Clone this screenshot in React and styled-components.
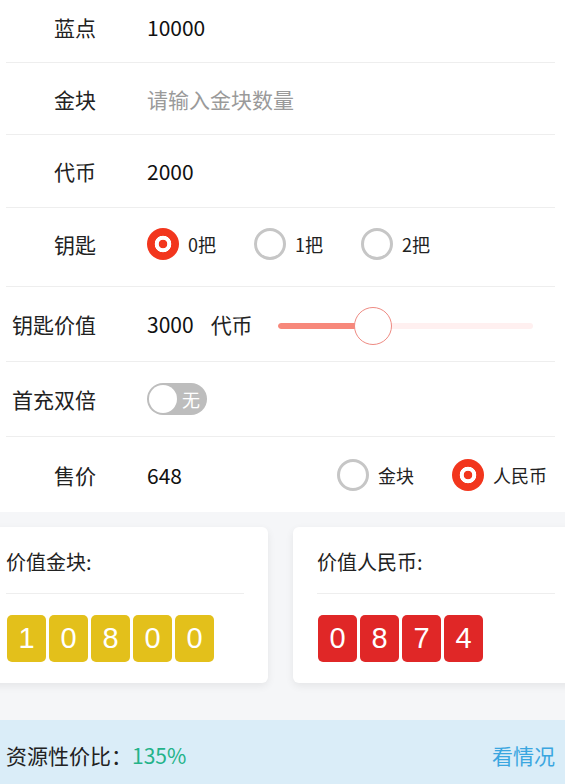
import React from 'react';
import styled, { createGlobalStyle } from 'styled-components';

const GlobalStyle = createGlobalStyle`
  html, body {
    margin: 0;
    padding: 0;
    background: #ffffff;
    overflow-x: hidden;
  }
  body {
    font-family: "Noto Sans CJK SC", "Noto Sans", sans-serif;
    color: #222;
  }
  * { box-sizing: border-box; }
`;

const Page = styled.div`
  width: 565px;
  overflow: hidden;
`;

const Form = styled.div`
  background: #fff;
  margin-top: -9px;
`;

const Row = styled.div`
  display: flex;
  align-items: center;
  height: ${p => p.h || 72}px;
  margin: 0 10px 0 6px;
  padding-right: 8px;
  padding-bottom: ${p => p.lift || 0}px;
  border-bottom: ${p => (p.last ? 'none' : '1px solid #eeeeee')};
`;

const Label = styled.div`
  width: 90px;
  flex: none;
  text-align: right;
  font-size: 21px;
  color: #222;
`;

const Value = styled.div`
  margin-left: 51px;
  font-size: 21px;
  color: ${p => (p.placeholder ? '#9a9a9a' : '#111')};
`;

const Unit = styled.span`
  margin-left: 17px;
  font-size: 21px;
  color: #222;
`;

const RadioGroup = styled.div`
  display: flex;
  align-items: center;
  margin-left: ${p => (p.right ? 'auto' : '51px')};
`;

const RadioItem = styled.div`
  display: flex;
  align-items: center;
  gap: 9px;
  font-size: 18px;
  color: #222;
  & + & {
    margin-left: 38px;
  }
`;

const RadioCircle = styled.span`
  width: 32px;
  height: 32px;
  border-radius: 50%;
  flex: none;
  ${p =>
    p.checked
      ? `background: radial-gradient(circle, #f2361d 0 4px, #fff 4.6px 8px, #f2361d 8.6px);`
      : `border: 3px solid #c6c6c6; background: #fff;`}
`;

const SliderWrap = styled.div`
  position: relative;
  margin: 4px 0 0 25px;
  width: 255px;
  height: 38px;
  display: flex;
  align-items: center;
`;

const Track = styled.div`
  width: 100%;
  height: 6px;
  border-radius: 3px;
  background: #fff0f0;
  overflow: hidden;
`;

const Fill = styled.div`
  height: 100%;
  background: #f7887b;
  border-radius: 3px;
`;

const Thumb = styled.div`
  position: absolute;
  top: 0;
  width: 38px;
  height: 38px;
  margin-left: -19px;
  border-radius: 50%;
  background: #fff;
  border: 1px solid #ee8a82;
`;

const Switch = styled.div`
  margin-left: 51px;
  width: 60px;
  height: 32px;
  border-radius: 16px;
  background: #bdbdbd;
  display: flex;
  align-items: center;
  padding: 0 4px 0 2px;
`;

const Knob = styled.span`
  width: 28px;
  height: 28px;
  border-radius: 50%;
  background: #fff;
`;

const SwitchText = styled.span`
  margin-left: 5px;
  font-size: 18px;
  color: #fff;
`;

const Gray = styled.div`
  background: #f5f6f8;
  padding: 15px 0 37px;
`;

const Cards = styled.div`
  display: flex;
  gap: 25px;
  margin-left: -18px;
`;

const Card = styled.div`
  flex: none;
  width: 286px;
  height: 156px;
  background: #fff;
  border-radius: 6px;
  box-shadow: 0 3px 8px rgba(0, 0, 0, 0.07);
  padding: 0 24px;
`;

const CardTitle = styled.div`
  height: 67px;
  padding-top: 20px;
  font-size: 20px;
  color: #222;
  border-bottom: 1px solid #eeeeee;
`;

const Digits = styled.div`
  display: flex;
  gap: 3px;
  margin-top: 21px;
  padding-left: 1px;
`;

const Digit = styled.span`
  width: 39px;
  height: 47px;
  border-radius: 5px;
  background: ${p => p.color};
  color: #fff;
  font-family: "Liberation Sans", Arial, sans-serif;
  font-size: 29px;
  display: flex;
  align-items: center;
  justify-content: center;
`;

const Footer = styled.div`
  height: 70px;
  background: #daedf8;
  display: flex;
  align-items: center;
  justify-content: space-between;
  padding: 0 10px 0 6px;
  font-size: 21px;
  color: #222;
`;

const Ratio = styled.span`
  color: #23b389;
`;

const Link = styled.span`
  color: #3aa6e0;
`;

const keyOptions = ['0把', '1把', '2把'];

const Radio = ({ checked, children }) => (
  <RadioItem>
    <RadioCircle checked={checked} />
    {children}
  </RadioItem>
);

const App = () => {
  const keyValue = 3000;
  const pct = (keyValue / 8000) * 100;

  return (
    <Page>
      <GlobalStyle />
      <Form>
        <Row>
          <Label>蓝点</Label>
          <Value>10000</Value>
        </Row>
        <Row>
          <Label>金块</Label>
          <Value placeholder>请输入金块数量</Value>
        </Row>
        <Row h={73}>
          <Label>代币</Label>
          <Value>2000</Value>
        </Row>
        <Row h={79} lift={6}>
          <Label>钥匙</Label>
          <RadioGroup>
            {keyOptions.map((k, i) => (
              <Radio key={k} checked={i === 0}>{k}</Radio>
            ))}
          </RadioGroup>
        </Row>
        <Row h={75}>
          <Label>钥匙价值</Label>
          <Value>
            {keyValue}
            <Unit>代币</Unit>
          </Value>
          <SliderWrap>
            <Track>
              <Fill style={{ width: `${pct}%` }} />
            </Track>
            <Thumb style={{ left: `${pct}%` }} />
          </SliderWrap>
        </Row>
        <Row h={75}>
          <Label>首充双倍</Label>
          <Switch>
            <Knob />
            <SwitchText>无</SwitchText>
          </Switch>
        </Row>
        <Row h={75} last>
          <Label>售价</Label>
          <Value>648</Value>
          <RadioGroup right>
            <Radio>金块</Radio>
            <Radio checked>人民币</Radio>
          </RadioGroup>
        </Row>
      </Form>
      <Gray>
        <Cards>
          <Card>
            <CardTitle>价值金块:</CardTitle>
            <Digits>
              {'10800'.split('').map((d, i) => (
                <Digit key={i} color="#e3c01b">{d}</Digit>
              ))}
            </Digits>
          </Card>
          <Card>
            <CardTitle>价值人民币:</CardTitle>
            <Digits>
              {'0874'.split('').map((d, i) => (
                <Digit key={i} color="#e02727">{d}</Digit>
              ))}
            </Digits>
          </Card>
        </Cards>
      </Gray>
      <Footer>
        <span>
          资源性价比：<Ratio>135%</Ratio>
        </span>
        <Link>看情况</Link>
      </Footer>
    </Page>
  );
};

export default App;
